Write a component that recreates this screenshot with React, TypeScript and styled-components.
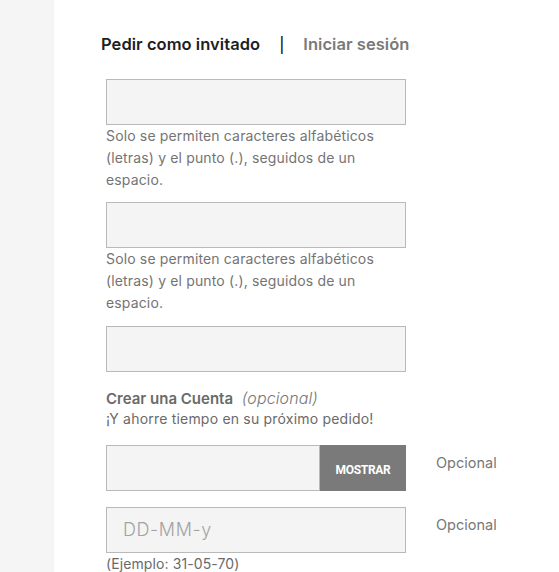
import React from "react";
import styled, { createGlobalStyle } from "styled-components";

const GlobalStyle = createGlobalStyle`
  html, body {
    margin: 0;
    padding: 0;
    background: #fff;
  }
  body {
    font-family: Inter, "Noto Sans", sans-serif;
  }
`;

const Page = styled.div`
  display: flex;
  min-height: 572px;
`;

const Sidebar = styled.div`
  width: 54px;
  flex-shrink: 0;
  background: #f5f5f5;
`;

const Main = styled.main`
  flex: 1;
  padding: 34px 0 0 47px;
`;

const Tabs = styled.div`
  display: flex;
  align-items: center;
  height: 20px;
  margin-bottom: 25px;
`;

const Tab = styled.span<{ $active?: boolean }>`
  font-size: 16.5px;
  font-weight: 600;
  letter-spacing: 0.05px;
  color: ${({ $active }) => ($active ? "#1e1e1e" : "#7a7a7a")};
`;

const Divider = styled.span`
  font-size: 15px;
  font-weight: 500;
  color: #222;
  margin: 0 19px 0 19px;
`;

const Form = styled.div`
  padding-left: 5px;
  width: 300px;
  display: flex;
  flex-direction: column;
`;

const Field = styled.div<{ $gap?: number }>`
  margin-top: ${({ $gap }) => $gap ?? 0}px;
`;

const Input = styled.div<{ $width?: number }>`
  box-sizing: border-box;
  width: ${({ $width }) => $width ?? 300}px;
  height: 46px;
  background: #f4f4f4;
  border: 1px solid #b9b9b9;
  display: flex;
  align-items: center;
  padding-left: 16px;
`;

const Placeholder = styled.span`
  font-family: Inter, "Noto Sans", sans-serif;
  font-weight: 300;
  font-size: 18px;
  letter-spacing: 0.6px;
  color: #a3a3a3;
`;

const Help = styled.p`
  margin: 0;
  font-size: 14px;
  line-height: 21.8px;
  color: #747474;
  letter-spacing: 0.15px;
`;

const AccountTitle = styled.div`
  margin-top: 16px;
  font-size: 15px;
  line-height: 20px;
  font-weight: 600;
  color: #6a6a6a;

  em {
    font-weight: 300;
    font-style: italic;
    font-size: 16px;
    letter-spacing: 0.1px;
    color: #777;
    margin-left: 5px;
  }
`;

const AccountSub = styled.div`
  font-size: 14px;
  line-height: 20px;
  color: #6a6a6a;
  letter-spacing: 0.2px;
`;

const Row = styled.div<{ $gap?: number }>`
  display: flex;
  align-items: flex-start;
  margin-top: ${({ $gap }) => $gap ?? 0}px;
  width: 430px;
`;

const Group = styled.div`
  display: flex;
  width: 300px;
  flex-shrink: 0;
`;

const ShowButton = styled.button`
  width: 86px;
  height: 46px;
  border: none;
  background: #7a7a7a;
  color: #fff;
  font-family: Roboto, "Liberation Sans", sans-serif;
  font-weight: 700;
  font-size: 12px;
  letter-spacing: -0.3px;
  padding: 4px 0 0;
`;

const Optional = styled.span`
  margin-left: 30px;
  padding-top: 9px;
  font-size: 14.5px;
  color: #777;
  white-space: nowrap;
`;

const Example = styled.div`
  font-size: 14px;
  line-height: 22px;
  color: #6a6a6a;
  letter-spacing: 0.1px;
`;

const HELP_TEXT =
  "Solo se permiten caracteres alfabéticos (letras) y el punto (.), seguidos de un espacio.";

export default function App() {
  return (
    <>
      <GlobalStyle />
      <Page>
        <Sidebar />
        <Main>
          <Tabs>
            <Tab $active>Pedir como invitado</Tab>
            <Divider>|</Divider>
            <Tab>Iniciar sesión</Tab>
          </Tabs>
          <Form>
            <Field>
              <Input />
              <Help>{HELP_TEXT}</Help>
            </Field>
            <Field $gap={12}>
              <Input />
              <Help>{HELP_TEXT}</Help>
            </Field>
            <Field $gap={12}>
              <Input />
            </Field>
            <AccountTitle>
              Crear una Cuenta <em>(opcional)</em>
            </AccountTitle>
            <AccountSub>¡Y ahorre tiempo en su próximo pedido!</AccountSub>
            <Row $gap={16}>
              <Group>
                <Input $width={214} />
                <ShowButton>MOSTRAR</ShowButton>
              </Group>
              <Optional>Opcional</Optional>
            </Row>
            <Row $gap={16}>
              <Group>
                <Input>
                  <Placeholder>DD-MM-y</Placeholder>
                </Input>
              </Group>
              <Optional>Opcional</Optional>
            </Row>
            <Example>(Ejemplo: 31-05-70)</Example>
          </Form>
        </Main>
      </Page>
    </>
  );
}
